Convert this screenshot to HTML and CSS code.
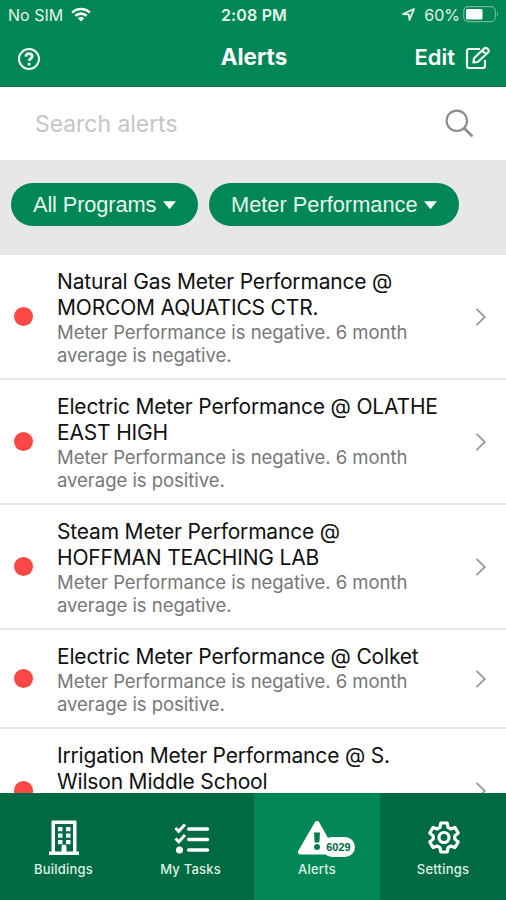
FILE: index.html
```html
<!DOCTYPE html>
<html lang="en">
<head>
<meta charset="utf-8">
<title>Alerts</title>
<link rel="stylesheet" href="styles.css">
</head>
<body>
<div class="app">
  <header class="header">
    <div class="status">
      <div class="status-left">
        <span class="carrier">No SIM</span>
        <svg class="wifi" width="20" height="15" viewBox="0 0 20 15" fill="none" stroke="#fff" stroke-width="2.6"><path d="M1.2 5.6a12.6 12.6 0 0 1 17.6 0M4.3 8.9a8.2 8.2 0 0 1 11.4 0"/><path d="M10 14.5 6.7 11.2a4.8 4.8 0 0 1 6.6 0z" fill="#fff" stroke="none"/></svg>
      </div>
      <span class="time">2:08 PM</span>
      <div class="status-right">
        <svg class="locate" width="13" height="13" viewBox="0 0 13 13" fill="none" stroke="#e3f5e9" stroke-width="1.8" stroke-linejoin="round"><path d="M1 6 12 1 7.5 12 6.8 6.3z"/></svg>
        <span class="percent">60%</span>
        <svg class="battery" width="37" height="17" viewBox="0 0 37 17"><rect x=".7" y=".7" width="31.6" height="15" rx="4.5" fill="none" stroke="#70b795" stroke-width="1.2"/><rect x="3" y="3" width="16.5" height="10.5" rx="1.5" fill="#fff"/><path d="M34 5.5q2.4 2.7 0 5.4z" fill="#70b795"/></svg>
      </div>
    </div>
    <div class="nav">
      <svg class="help" width="24" height="24" viewBox="0 0 24 24" fill="none" stroke="#eefbf2" stroke-width="2"><circle cx="12" cy="12" r="10"/><path d="M8.8 9.6c.3-4 6.600-3.700 6.400-.2-.1 2.300-3 2.100-3 4.500" stroke-width="2.700"/><circle cx="12.100" cy="17" r="1.600" fill="#eefbf2" stroke="none"/></svg>
      <h1 class="title">Alerts</h1>
      <div class="edit">
        <span class="edit-label">Edit</span>
        <svg width="26" height="24" viewBox="0 0 26 24" fill="none" stroke="#eefbf2" stroke-width="2.200" stroke-linejoin="round"><path d="M15 3H4a2 2 0 0 0-2 2v15a2 2 0 0 0 2 2h14a2 2 0 0 0 2-2v-6"/><path d="M8.500 16.500 9 12.200 19.300 2.400a1.900 1.900 0 0 1 2.700 0l1.200 1.100a1.900 1.900 0 0 1 0 2.700L12.800 16zM17.200 4.500l3.800 3.800"/></svg>
      </div>
    </div>
  </header>
  <div class="search">
    <span class="placeholder">Search alerts</span>
    <svg width="29" height="29" viewBox="0 0 29 29" fill="none" stroke="#8b8b94" stroke-width="2.1"><circle cx="11.8" cy="11.8" r="10.2"/><path d="m19 19 8.5 8.5" stroke-width="2.5"/></svg>
  </div>
  <div class="filters">
    <div class="pill pill-programs"><span>All Programs</span><i class="caret"></i></div>
    <div class="pill pill-meter"><span>Meter Performance</span><i class="caret"></i></div>
  </div>
  <main class="list">
    <article class="row">
      <i class="dot"></i>
      <div class="copy">
        <h2>Natural Gas Meter Performance @<br>MORCOM AQUATICS CTR.</h2>
        <p>Meter Performance is negative. 6 month<br>average is negative.</p>
      </div>
      <svg class="chevron" width="12" height="20" viewBox="0 0 12 20"><path d="m1.5 1.8 8.3 8.2-8.3 8.2"/></svg>
    </article>
    <article class="row">
      <i class="dot"></i>
      <div class="copy">
        <h2>Electric Meter Performance @ OLATHE<br>EAST HIGH</h2>
        <p>Meter Performance is negative. 6 month<br>average is positive.</p>
      </div>
      <svg class="chevron" width="12" height="20" viewBox="0 0 12 20"><path d="m1.5 1.8 8.3 8.2-8.3 8.2"/></svg>
    </article>
    <article class="row">
      <i class="dot"></i>
      <div class="copy">
        <h2>Steam Meter Performance @<br>HOFFMAN TEACHING LAB</h2>
        <p>Meter Performance is negative. 6 month<br>average is negative.</p>
      </div>
      <svg class="chevron" width="12" height="20" viewBox="0 0 12 20"><path d="m1.5 1.8 8.3 8.2-8.3 8.2"/></svg>
    </article>
    <article class="row">
      <i class="dot"></i>
      <div class="copy">
        <h2>Electric Meter Performance @ Colket</h2>
        <p>Meter Performance is negative. 6 month<br>average is positive.</p>
      </div>
      <svg class="chevron" width="12" height="20" viewBox="0 0 12 20"><path d="m1.5 1.8 8.3 8.2-8.3 8.2"/></svg>
    </article>
    <article class="row row-cut">
      <i class="dot"></i>
      <div class="copy">
        <h2>Irrigation Meter Performance @ S.<br>Wilson Middle School</h2>
      </div>
      <svg class="chevron" width="12" height="20" viewBox="0 0 12 20"><path d="m1.5 1.8 8.3 8.2-8.3 8.2"/></svg>
    </article>
  </main>
  <nav class="tabs">
    <div class="tab">
      <svg width="30" height="36" viewBox="0 0 30 36" fill="#fff"><path fill-rule="evenodd" d="M3.500.5h23a1 1 0 0 1 1 1V31.500H30V35H0v-3.500h2.500V1.500a1 1 0 0 1 1-1zM6 4v27.500h6.500V27a2 2 0 0 1 5 0v4.500H24V4z"/><path d="M9 7h4.500v4.200H9zm8 0h4.500v4.200H17zM9 13.500h4.500v4.200H9zm8 0h4.500v4.200H17zM9 20h4.500v4.200H9zm8 0h4.500v4.200H17z"/></svg>
      <span>Buildings</span>
    </div>
    <div class="tab">
      <svg class="tasks-icon" width="36" height="36" viewBox="0 0 36 36" fill="none" stroke="#fff"><path d="m1.500 8 3.200 3.300L11 4.500M1.500 18.500l3.200 3.300L11 15" stroke-width="2.900"/><path d="M14.700 9h18.800M14.700 19.500h18.800M14.700 30h18.800" stroke-width="3.500" stroke-linecap="round"/><circle cx="5.500" cy="30" r="3.500" fill="#fff" stroke="none"/></svg>
      <span>My Tasks</span>
    </div>
    <div class="tab tab-active">
      <div class="alert-icon">
        <svg width="40" height="36" viewBox="0 0 40 36"><path d="M20 3.500 36 32H3.500z" fill="#fff" stroke="#fff" stroke-width="5" stroke-linejoin="round"/><path d="M17 12.500h6l-.7 10h-4.600z" fill="#007a4b"/><circle cx="20" cy="27" r="3" fill="#007a4b"/></svg>
        <b class="badge">6029</b>
      </div>
      <span>Alerts</span>
    </div>
    <div class="tab">
      <svg class="gear" width="36" height="36" viewBox="0 0 36 36" fill="none" stroke="#fff" stroke-width="3.200" stroke-linejoin="round"><path d="M14.800 3h6.400l.8 4.400 2.800 1.600 4.200-1.500 3.200 5.500-3.400 2.900v3.200l3.400 2.900-3.200 5.500-4.200-1.500-2.800 1.600-.8 4.400h-6.400l-.8-4.400-2.800-1.600L7 27.500 3.800 22l3.400-2.900v-3.200L3.800 13 7 7.500 11.200 9 14 7.400z"/><circle cx="18" cy="17.500" r="5"/></svg>
      <span>Settings</span>
    </div>
  </nav>
</div>
</body>
</html>
```
FILE: styles.css
```css
* { box-sizing: border-box; }
body { margin: 0; font-family: Inter, "Liberation Sans", sans-serif; }
svg { display: block; flex: none; }
i { display: block; flex: none; }
.app { width: 506px; height: 900px; display: flex; flex-direction: column; overflow: hidden; background: #fff; }

.header { height: 87px; flex: none; background: #018656; border-bottom: 1px solid #007449; color: #fff; }
.status { height: 29px; display: grid; grid-template-columns: 1fr auto 1fr; align-items: center; padding: 0 6px 0 8px; font-size: 16px; line-height: 20px; color: #e3f5e9; white-space: nowrap; }
.status-left, .status-right { display: flex; align-items: center; }
.status-left { gap: 8px; }
.status-right { justify-content: flex-end; }
.locate { margin-right: 9px; }
.percent { margin-right: 3px; }
.time { font-weight: 600; letter-spacing: 0.15px; }
.nav { height: 56px; display: grid; grid-template-columns: 1fr auto 1fr; align-items: center; padding: 0 15px 0 17px; }
.help { margin-top: 4px; }
.title { margin: 0; font-size: 22.5px; line-height: 28px; font-weight: 700; }
.edit { display: flex; justify-content: flex-end; align-items: center; gap: 10px; font-size: 22px; line-height: 28px; font-weight: 600; }
.edit svg { margin-top: 2px; }

.search { height: 74px; flex: none; display: flex; align-items: center; justify-content: space-between; padding: 0 32px 0 35px; font-size: 22.9px; color: #c5c5c7; border-bottom: 1px solid #e3e3e3; }
.filters { height: 94px; flex: none; display: flex; align-items: flex-start; gap: 11px; padding: 22px 11px; background: #e7e7e7; }
.pill { height: 42.5px; border-radius: 22px; background: #018656; color: #e6f7ec; display: flex; align-items: center; justify-content: space-between; padding: 0 22px; font: 21.8px/41px "Liberation Sans", sans-serif; white-space: nowrap; }
.pill-programs { width: 187px; letter-spacing: -0.13px; }
.pill-meter { width: 250px; }
.caret { width: 13px; height: 8px; background: #f4fff8; clip-path: polygon(0 0, 100% 0, 50% 100%); margin-top: 2px; }

.list { flex: 1; min-height: 0; overflow: hidden; }
.row { display: flex; align-items: center; border-bottom: 2px solid #e6e6e6; padding: 14px 19px 11px 14px; }
.dot { width: 19px; height: 19px; border-radius: 50%; background: #fc4946; margin-bottom: 3px; }
.copy { flex: 1; margin-left: 24px; white-space: nowrap; }
h2 { margin: 0; font-size: 21px; line-height: 26px; font-weight: 400; letter-spacing: -0.18px; color: #111; }
p { margin: 0; font-size: 18.5px; line-height: 23px; letter-spacing: -0.03px; color: #777; }
.chevron { fill: none; stroke: #999; stroke-width: 1.8; margin-bottom: 2px; }
.row-cut { height: 125px; }
.row-cut .copy { align-self: flex-start; }

.tabs { height: 107px; flex: none; display: grid; grid-template-columns: 127px 127px 126px 126px; background: #006a43; color: #dff2e5; }
.tab { display: flex; flex-direction: column; align-items: center; padding-top: 27px; gap: 4px; font-size: 13px; line-height: 18px; font-weight: 500; letter-spacing: 0.2px; }
.tab-active { background: #018656; }
.tasks-icon { margin-left: 2px; }
.gear { margin-left: 2px; }
.alert-icon { position: relative; }
.badge { position: absolute; left: 25px; top: 17px; width: 33px; height: 20px; border-radius: 10px; background: #fff; color: #00683f; font: 700 11px/20px "Liberation Sans", sans-serif; letter-spacing: 0; text-align: center; }
```
